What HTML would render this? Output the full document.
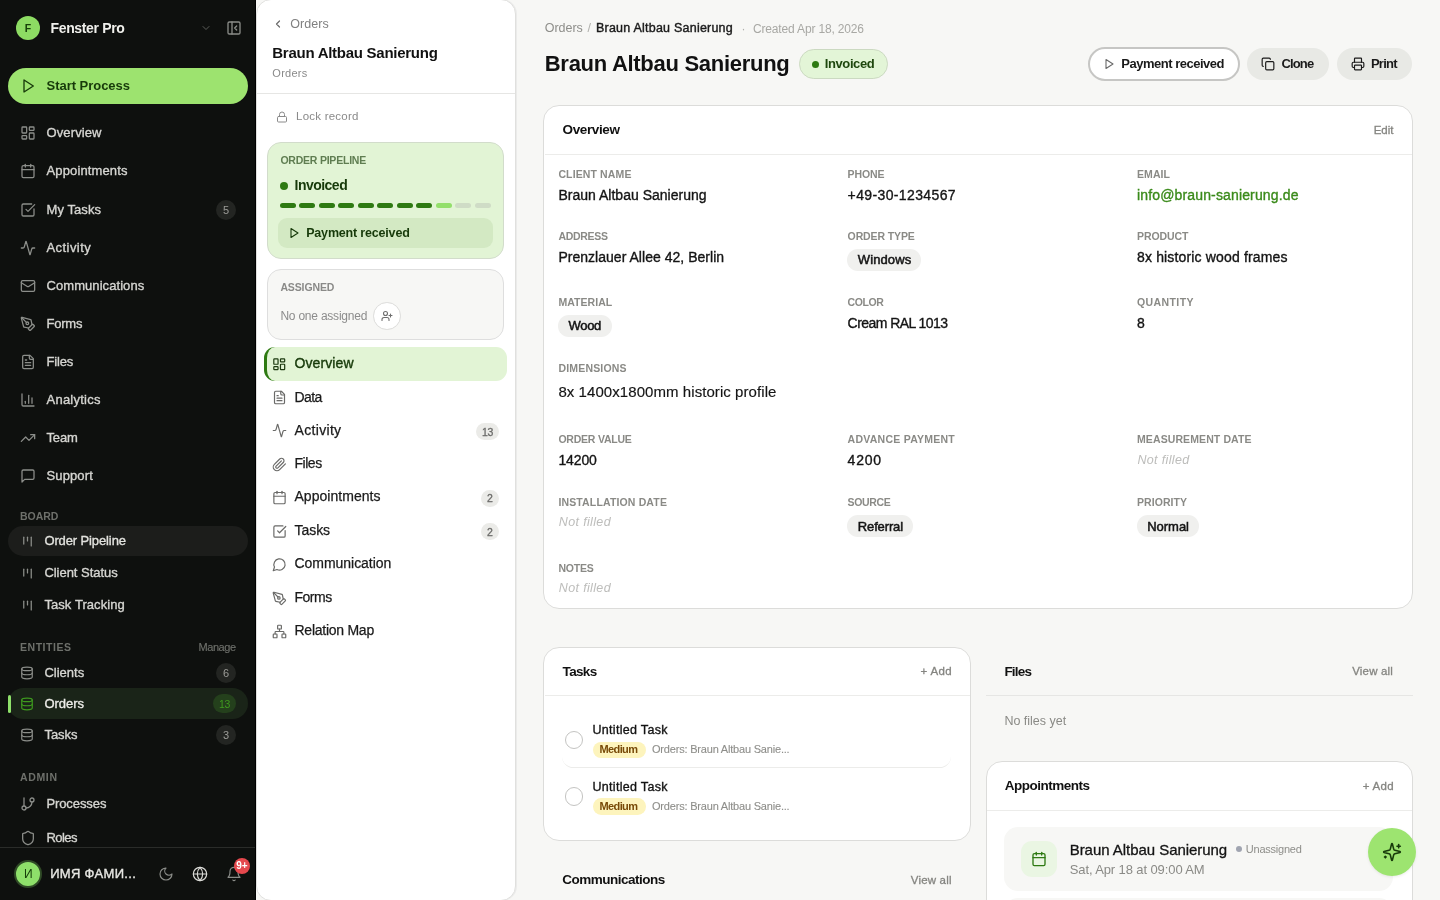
<!DOCTYPE html>
<html><head><meta charset="utf-8"><style>
html,body{margin:0;padding:0;width:1440px;height:900px;overflow:hidden;background:#f7f7f5;font-family:"Liberation Sans", sans-serif;}
body{position:relative;-webkit-font-smoothing:antialiased;}
#root{position:absolute;left:0;top:0;width:1440px;height:900px;will-change:transform;}
</style></head><body><div id="root">
<div style="position:absolute;left:0px;top:0px;width:256px;height:900px;background:#0e100e;border-radius:0px;"></div>
<div style="position:absolute;left:16px;top:16px;width:24px;height:24px;background:#8ddc63;border-radius:12px;"></div>
<div id="t0" style="position:absolute;top:20.56px;font-size:10.5px;line-height:14px;font-weight:700;color:#17400a;white-space:nowrap;left:-122px;width:300px;text-align:center;">F</div>
<div id="t1" style="position:absolute;top:19.15px;font-size:14px;line-height:19px;font-weight:700;color:#f0f0ec;white-space:nowrap;left:50.5px;letter-spacing:-0.351px;">Fenster Pro</div>
<svg style="position:absolute;left:200.00px;top:22.00px;" width="12" height="12" viewBox="0 0 24 24" fill="none" stroke="#5c5e5a" stroke-width="2" stroke-linecap="round" stroke-linejoin="round"><path d="m6 9 6 6 6-6"/></svg>
<svg style="position:absolute;left:226.20px;top:20.00px;" width="16" height="16" viewBox="0 0 24 24" fill="none" stroke="#8a8c88" stroke-width="2" stroke-linecap="round" stroke-linejoin="round"><rect width="18" height="18" x="3" y="3" rx="2"/><path d="M9 3v18"/><path d="m16 15-3-3 3-3"/></svg>
<div style="position:absolute;left:8px;top:68px;width:240px;height:36px;background:#9de36f;border-radius:18px;"></div>
<svg style="position:absolute;left:19.80px;top:77.80px;" width="16" height="16" viewBox="0 0 24 24" fill="none" stroke="#173a0a" stroke-width="2" stroke-linecap="round" stroke-linejoin="round"><polygon points="6 3 20 12 6 21 6 3"/></svg>
<div id="t2" style="position:absolute;top:77.10px;font-size:13px;line-height:17px;font-weight:700;color:#173a0a;white-space:nowrap;left:46.5px;letter-spacing:-0.027px;">Start Process</div>
<svg style="position:absolute;left:20.00px;top:124.70px;" width="16" height="16" viewBox="0 0 24 24" fill="none" stroke="#8c8e8a" stroke-width="1.9" stroke-linecap="round" stroke-linejoin="round"><rect width="7" height="9" x="3" y="3" rx="1"/><rect width="7" height="5" x="14" y="3" rx="1"/><rect width="7" height="9" x="14" y="12" rx="1"/><rect width="7" height="5" x="3" y="16" rx="1"/></svg>
<div id="t3" style="position:absolute;top:124.20px;font-size:13px;line-height:17px;font-weight:400;color:#d6d6d2;white-space:nowrap;-webkit-text-stroke:0.35px #d6d6d2;left:46.5px;letter-spacing:0.116px;">Overview</div>
<svg style="position:absolute;left:20.00px;top:162.60px;" width="16" height="16" viewBox="0 0 24 24" fill="none" stroke="#8c8e8a" stroke-width="1.9" stroke-linecap="round" stroke-linejoin="round"><path d="M8 2v4"/><path d="M16 2v4"/><rect width="18" height="18" x="3" y="4" rx="2"/><path d="M3 10h18"/></svg>
<div id="t4" style="position:absolute;top:162.10px;font-size:13px;line-height:17px;font-weight:400;color:#d6d6d2;white-space:nowrap;-webkit-text-stroke:0.35px #d6d6d2;left:46.5px;letter-spacing:0.136px;">Appointments</div>
<svg style="position:absolute;left:20.00px;top:201.50px;" width="16" height="16" viewBox="0 0 24 24" fill="none" stroke="#8c8e8a" stroke-width="1.9" stroke-linecap="round" stroke-linejoin="round"><path d="M21 10.5V19a2 2 0 0 1-2 2H5a2 2 0 0 1-2-2V5a2 2 0 0 1 2-2h12.5"/><path d="m9 11 3 3L22 4"/></svg>
<div id="t5" style="position:absolute;top:201.00px;font-size:13px;line-height:17px;font-weight:400;color:#d6d6d2;white-space:nowrap;-webkit-text-stroke:0.35px #d6d6d2;left:46.5px;letter-spacing:0.080px;">My Tasks</div>
<svg style="position:absolute;left:20.00px;top:239.70px;" width="16" height="16" viewBox="0 0 24 24" fill="none" stroke="#8c8e8a" stroke-width="1.9" stroke-linecap="round" stroke-linejoin="round"><path d="M22 12h-2.48a2 2 0 0 0-1.93 1.46l-2.35 8.36a.25.25 0 0 1-.48 0L9.24 2.18a.25.25 0 0 0-.48 0l-2.35 8.36A2 2 0 0 1 4.49 12H2"/></svg>
<div id="t6" style="position:absolute;top:239.20px;font-size:13px;line-height:17px;font-weight:400;color:#d6d6d2;white-space:nowrap;-webkit-text-stroke:0.35px #d6d6d2;left:46.5px;letter-spacing:0.433px;">Activity</div>
<svg style="position:absolute;left:20.00px;top:277.70px;" width="16" height="16" viewBox="0 0 24 24" fill="none" stroke="#8c8e8a" stroke-width="1.9" stroke-linecap="round" stroke-linejoin="round"><rect width="20" height="16" x="2" y="4" rx="2"/><path d="m22 7-8.97 5.7a1.94 1.94 0 0 1-2.06 0L2 7"/></svg>
<div id="t7" style="position:absolute;top:277.20px;font-size:13px;line-height:17px;font-weight:400;color:#d6d6d2;white-space:nowrap;-webkit-text-stroke:0.35px #d6d6d2;left:46.5px;letter-spacing:0.067px;">Communications</div>
<svg style="position:absolute;left:20.00px;top:315.70px;" width="16" height="16" viewBox="0 0 24 24" fill="none" stroke="#8c8e8a" stroke-width="1.9" stroke-linecap="round" stroke-linejoin="round"><path d="M15.707 21.293a1 1 0 0 1-1.414 0l-1.586-1.586a1 1 0 0 1 0-1.414l5.586-5.586a1 1 0 0 1 1.414 0l1.586 1.586a1 1 0 0 1 0 1.414z"/><path d="m18 13-1.375-6.874a1 1 0 0 0-.746-.776L3.235 2.028a1 1 0 0 0-1.207 1.207L5.35 15.879a1 1 0 0 0 .776.746L13 18"/><path d="m2.3 2.3 7.286 7.286"/><circle cx="11" cy="11" r="2"/></svg>
<div id="t8" style="position:absolute;top:315.20px;font-size:13px;line-height:17px;font-weight:400;color:#d6d6d2;white-space:nowrap;-webkit-text-stroke:0.35px #d6d6d2;left:46.5px;letter-spacing:-0.211px;">Forms</div>
<svg style="position:absolute;left:20.00px;top:353.70px;" width="16" height="16" viewBox="0 0 24 24" fill="none" stroke="#8c8e8a" stroke-width="1.9" stroke-linecap="round" stroke-linejoin="round"><path d="M15 2H6a2 2 0 0 0-2 2v16a2 2 0 0 0 2 2h12a2 2 0 0 0 2-2V7Z"/><path d="M14 2v4a2 2 0 0 0 2 2h4"/><path d="M10 9H8"/><path d="M16 13H8"/><path d="M16 17H8"/></svg>
<div id="t9" style="position:absolute;top:353.20px;font-size:13px;line-height:17px;font-weight:400;color:#d6d6d2;white-space:nowrap;-webkit-text-stroke:0.35px #d6d6d2;left:46.5px;letter-spacing:-0.163px;">Files</div>
<svg style="position:absolute;left:20.00px;top:391.70px;" width="16" height="16" viewBox="0 0 24 24" fill="none" stroke="#8c8e8a" stroke-width="1.9" stroke-linecap="round" stroke-linejoin="round"><path d="M3 3v16a2 2 0 0 0 2 2h16"/><path d="M18 17V9"/><path d="M13 17V5"/><path d="M8 17v-3"/></svg>
<div id="t10" style="position:absolute;top:391.20px;font-size:13px;line-height:17px;font-weight:400;color:#d6d6d2;white-space:nowrap;-webkit-text-stroke:0.35px #d6d6d2;left:46.5px;letter-spacing:0.246px;">Analytics</div>
<svg style="position:absolute;left:20.00px;top:429.70px;" width="16" height="16" viewBox="0 0 24 24" fill="none" stroke="#8c8e8a" stroke-width="1.9" stroke-linecap="round" stroke-linejoin="round"><polyline points="22 7 13.5 15.5 8.5 10.5 2 17"/><polyline points="16 7 22 7 22 13"/></svg>
<div id="t11" style="position:absolute;top:429.20px;font-size:13px;line-height:17px;font-weight:400;color:#d6d6d2;white-space:nowrap;-webkit-text-stroke:0.35px #d6d6d2;left:46.5px;letter-spacing:-0.132px;">Team</div>
<svg style="position:absolute;left:20.00px;top:467.60px;" width="16" height="16" viewBox="0 0 24 24" fill="none" stroke="#8c8e8a" stroke-width="1.9" stroke-linecap="round" stroke-linejoin="round"><path d="M21 15a2 2 0 0 1-2 2H7l-4 4V5a2 2 0 0 1 2-2h14a2 2 0 0 1 2 2z"/></svg>
<div id="t12" style="position:absolute;top:467.10px;font-size:13px;line-height:17px;font-weight:400;color:#d6d6d2;white-space:nowrap;-webkit-text-stroke:0.35px #d6d6d2;left:46.5px;letter-spacing:0.126px;">Support</div>
<div style="position:absolute;left:216px;top:199.5px;width:20px;height:20px;background:#232522;border-radius:10px;"></div>
<div id="t13" style="position:absolute;top:202.69px;font-size:11px;line-height:15px;font-weight:400;color:#9c9c98;white-space:nowrap;left:76px;width:300px;text-align:center;">5</div>
<div id="t14" style="position:absolute;top:509.36px;font-size:10.5px;line-height:14px;font-weight:700;color:#6e706b;white-space:nowrap;left:20px;letter-spacing:-0.025px;">BOARD</div>
<div style="position:absolute;left:8px;top:526px;width:240px;height:30px;background:#1c1d1b;border-radius:15px;"></div>
<svg style="position:absolute;left:19.50px;top:533.60px;" width="15" height="15" viewBox="0 0 24 24" fill="none" stroke="#8c8e8a" stroke-width="2" stroke-linecap="round" stroke-linejoin="round"><path d="M6 5v11"/><path d="M12 5v6"/><path d="M18 5v14"/></svg>
<div id="t15" style="position:absolute;top:532.20px;font-size:13px;line-height:17px;font-weight:400;color:#e2e2de;white-space:nowrap;-webkit-text-stroke:0.35px #e2e2de;left:44.4px;letter-spacing:-0.116px;">Order Pipeline</div>
<svg style="position:absolute;left:19.50px;top:565.50px;" width="15" height="15" viewBox="0 0 24 24" fill="none" stroke="#8c8e8a" stroke-width="2" stroke-linecap="round" stroke-linejoin="round"><path d="M6 5v11"/><path d="M12 5v6"/><path d="M18 5v14"/></svg>
<div id="t16" style="position:absolute;top:564.10px;font-size:13px;line-height:17px;font-weight:400;color:#d6d6d2;white-space:nowrap;-webkit-text-stroke:0.35px #d6d6d2;left:44.4px;letter-spacing:-0.034px;">Client Status</div>
<svg style="position:absolute;left:19.50px;top:597.50px;" width="15" height="15" viewBox="0 0 24 24" fill="none" stroke="#8c8e8a" stroke-width="2" stroke-linecap="round" stroke-linejoin="round"><path d="M6 5v11"/><path d="M12 5v6"/><path d="M18 5v14"/></svg>
<div id="t17" style="position:absolute;top:596.10px;font-size:13px;line-height:17px;font-weight:400;color:#d6d6d2;white-space:nowrap;-webkit-text-stroke:0.35px #d6d6d2;left:44.4px;letter-spacing:0.076px;">Task Tracking</div>
<div id="t18" style="position:absolute;top:640.36px;font-size:10.5px;line-height:14px;font-weight:700;color:#6e706b;white-space:nowrap;left:20px;letter-spacing:0.533px;">ENTITIES</div>
<div id="t19" style="position:absolute;top:639.69px;font-size:11px;line-height:15px;font-weight:400;color:#6e706b;white-space:nowrap;-webkit-text-stroke:0.15px #6e706b;right:1204.4px;letter-spacing:-0.453px;">Manage</div>
<svg style="position:absolute;left:20.00px;top:666.00px;" width="14" height="14" viewBox="0 0 24 24" fill="none" stroke="#8c8e8a" stroke-width="2" stroke-linecap="round" stroke-linejoin="round"><ellipse cx="12" cy="5" rx="9" ry="3"/><path d="M3 5V19A9 3 0 0 0 21 19V5"/><path d="M3 12A9 3 0 0 0 21 12"/></svg>
<div id="t20" style="position:absolute;top:664.00px;font-size:13px;line-height:17px;font-weight:400;color:#d6d6d2;white-space:nowrap;-webkit-text-stroke:0.35px #d6d6d2;left:44.4px;">Clients</div>
<div style="position:absolute;left:216px;top:662.5px;width:20px;height:20px;background:#232522;border-radius:10px;"></div>
<div id="t21" style="position:absolute;top:665.69px;font-size:11px;line-height:15px;font-weight:400;color:#9c9c98;white-space:nowrap;left:76px;width:300px;text-align:center;">6</div>
<div style="position:absolute;left:8px;top:688px;width:240px;height:31px;background:#1a2418;border-radius:15.5px;"></div>
<div style="position:absolute;left:8px;top:695px;width:3px;height:17.6px;background:#8ee06a;border-radius:1.5px;"></div>
<svg style="position:absolute;left:20.00px;top:697.00px;" width="14" height="14" viewBox="0 0 24 24" fill="none" stroke="#3e9a1e" stroke-width="2" stroke-linecap="round" stroke-linejoin="round"><ellipse cx="12" cy="5" rx="9" ry="3"/><path d="M3 5V19A9 3 0 0 0 21 19V5"/><path d="M3 12A9 3 0 0 0 21 12"/></svg>
<div id="t22" style="position:absolute;top:695.00px;font-size:13px;line-height:17px;font-weight:400;color:#ecece8;white-space:nowrap;-webkit-text-stroke:0.35px #ecece8;left:44.4px;">Orders</div>
<div style="position:absolute;left:213px;top:694px;width:23px;height:19px;background:#24401c;border-radius:9.5px;"></div>
<div id="t23" style="position:absolute;top:696.96px;font-size:10.5px;line-height:14px;font-weight:400;color:#3f9a1f;white-space:nowrap;left:74.5px;width:300px;text-align:center;letter-spacing:-0.400px;">13</div>
<svg style="position:absolute;left:20.00px;top:728.00px;" width="14" height="14" viewBox="0 0 24 24" fill="none" stroke="#8c8e8a" stroke-width="2" stroke-linecap="round" stroke-linejoin="round"><ellipse cx="12" cy="5" rx="9" ry="3"/><path d="M3 5V19A9 3 0 0 0 21 19V5"/><path d="M3 12A9 3 0 0 0 21 12"/></svg>
<div id="t24" style="position:absolute;top:726.00px;font-size:13px;line-height:17px;font-weight:400;color:#d6d6d2;white-space:nowrap;-webkit-text-stroke:0.35px #d6d6d2;left:44.4px;">Tasks</div>
<div style="position:absolute;left:216px;top:724.5px;width:20px;height:20px;background:#232522;border-radius:10px;"></div>
<div id="t25" style="position:absolute;top:727.69px;font-size:11px;line-height:15px;font-weight:400;color:#9c9c98;white-space:nowrap;left:76px;width:300px;text-align:center;">3</div>
<div id="t26" style="position:absolute;top:770.36px;font-size:10.5px;line-height:14px;font-weight:700;color:#6e706b;white-space:nowrap;left:20px;letter-spacing:0.645px;">ADMIN</div>
<svg style="position:absolute;left:20.00px;top:795.70px;" width="16" height="16" viewBox="0 0 24 24" fill="none" stroke="#8c8e8a" stroke-width="1.9" stroke-linecap="round" stroke-linejoin="round"><line x1="6" x2="6" y1="3" y2="15"/><circle cx="18" cy="6" r="3"/><circle cx="6" cy="18" r="3"/><path d="M18 9a9 9 0 0 1-9 9"/></svg>
<div id="t27" style="position:absolute;top:795.00px;font-size:13px;line-height:17px;font-weight:400;color:#d6d6d2;white-space:nowrap;-webkit-text-stroke:0.35px #d6d6d2;left:46.4px;letter-spacing:-0.088px;">Processes</div>
<svg style="position:absolute;left:20.00px;top:830.00px;" width="16" height="16" viewBox="0 0 24 24" fill="none" stroke="#8c8e8a" stroke-width="1.9" stroke-linecap="round" stroke-linejoin="round"><path d="M20 13c0 5-3.5 7.5-7.66 8.95a1 1 0 0 1-.67-.01C7.5 20.5 4 18 4 13V6a1 1 0 0 1 1-1c2 0 4.5-1.2 6.24-2.72a1.17 1.17 0 0 1 1.52 0C14.51 3.81 17 5 19 5a1 1 0 0 1 1 1z"/></svg>
<div id="t28" style="position:absolute;top:829.00px;font-size:13px;line-height:17px;font-weight:400;color:#d6d6d2;white-space:nowrap;-webkit-text-stroke:0.35px #d6d6d2;left:46.4px;letter-spacing:-0.537px;">Roles</div>
<div style="position:absolute;left:0px;top:847px;width:256px;height:1px;background:#2a2c29;border-radius:0px;"></div>
<div style="position:absolute;left:0px;top:848px;width:256px;height:52px;background:#0e100e;border-radius:0px;"></div>
<div style="position:absolute;left:14.2px;top:860px;width:28px;height:28px;background:#8ee06a;border-radius:14px;border:2px solid #2f4a26;box-sizing:border-box;"></div>
<div id="t29" style="position:absolute;top:865.84px;font-size:12px;line-height:16px;font-weight:400;color:#17400a;white-space:nowrap;left:-121.8px;width:300px;text-align:center;">И</div>
<div id="t30" style="position:absolute;top:865.00px;font-size:13px;line-height:17px;font-weight:400;color:#e8e8e4;white-space:nowrap;-webkit-text-stroke:0.35px #e8e8e4;left:50.2px;letter-spacing:0.315px;">ИМЯ ФАМИ...</div>
<svg style="position:absolute;left:157.80px;top:865.80px;" width="16" height="16" viewBox="0 0 24 24" fill="none" stroke="#8a8c88" stroke-width="1.75" stroke-linecap="round" stroke-linejoin="round"><path d="M12 3a6 6 0 0 0 9 9 9 9 0 1 1-9-9Z"/></svg>
<svg style="position:absolute;left:192.00px;top:866.00px;" width="16" height="16" viewBox="0 0 24 24" fill="none" stroke="#dcdcd8" stroke-width="1.75" stroke-linecap="round" stroke-linejoin="round"><circle cx="12" cy="12" r="10"/><path d="M12 2a14.5 14.5 0 0 0 0 20 14.5 14.5 0 0 0 0-20"/><path d="M2 12h20"/></svg>
<svg style="position:absolute;left:226.00px;top:865.80px;" width="16" height="16" viewBox="0 0 24 24" fill="none" stroke="#8a8c88" stroke-width="1.75" stroke-linecap="round" stroke-linejoin="round"><path d="M6 8a6 6 0 0 1 12 0c0 7 3 9 3 9H3s3-2 3-9"/><path d="M10.3 21a1.94 1.94 0 0 0 3.4 0"/></svg>
<div style="position:absolute;left:234px;top:858px;width:16px;height:16px;background:#e5484d;border-radius:8px;"></div>
<div id="t31" style="position:absolute;top:859.24px;font-size:10px;line-height:13px;font-weight:700;color:#ffffff;white-space:nowrap;left:92px;width:300px;text-align:center;">9+</div>
<div style="position:absolute;left:255px;top:0px;width:1px;height:900px;background:#000;border-radius:0px;"></div>
<div style="position:absolute;left:256px;top:-1px;width:260px;height:902px;background:#ffffff;border-radius:15px;border:1px solid #e0e0de;box-sizing:border-box;box-shadow:1px 0 0 #ebebea;"></div>
<svg style="position:absolute;left:272.20px;top:18.00px;" width="12" height="12" viewBox="0 0 24 24" fill="none" stroke="#6a6a6a" stroke-width="2.4" stroke-linecap="round" stroke-linejoin="round"><path d="m15 18-6-6 6-6"/></svg>
<div id="t32" style="position:absolute;top:16.17px;font-size:12.5px;line-height:17px;font-weight:400;color:#808080;white-space:nowrap;left:290.3px;letter-spacing:0.059px;">Orders</div>
<div id="t33" style="position:absolute;top:42.90px;font-size:15px;line-height:20px;font-weight:700;color:#111111;white-space:nowrap;left:272.3px;letter-spacing:-0.268px;">Braun Altbau Sanierung</div>
<div id="t34" style="position:absolute;top:66.19px;font-size:11px;line-height:15px;font-weight:400;color:#8a8a8a;white-space:nowrap;left:272.3px;letter-spacing:0.275px;">Orders</div>
<div style="position:absolute;left:257px;top:93px;width:258px;height:1px;background:#e6e6e4;border-radius:0px;"></div>
<svg style="position:absolute;left:276.00px;top:111.00px;" width="12" height="12" viewBox="0 0 24 24" fill="none" stroke="#8a8a8a" stroke-width="2" stroke-linecap="round" stroke-linejoin="round"><rect width="18" height="11" x="3" y="11" rx="2" ry="2"/><path d="M7 11V7a5 5 0 0 1 10 0v4"/></svg>
<div id="t35" style="position:absolute;top:108.52px;font-size:11.5px;line-height:15px;font-weight:400;color:#8a8a8a;white-space:nowrap;left:296px;letter-spacing:0.231px;">Lock record</div>
<div style="position:absolute;left:267px;top:142px;width:237px;height:116.6px;background:#e2f4d5;border-radius:14px;border:1px solid #d2dccb;box-sizing:border-box;"></div>
<div id="t36" style="position:absolute;top:153.36px;font-size:10.5px;line-height:14px;font-weight:700;color:#5f7d51;white-space:nowrap;left:280.4px;letter-spacing:-0.222px;">ORDER PIPELINE</div>
<div style="position:absolute;left:280px;top:182px;width:8px;height:8px;background:#2e7a12;border-radius:4px;"></div>
<div id="t37" style="position:absolute;top:175.65px;font-size:14px;line-height:19px;font-weight:700;color:#173a0a;white-space:nowrap;left:294.5px;letter-spacing:-0.514px;">Invoiced</div>
<div style="position:absolute;left:280px;top:203.2px;width:16.2px;height:5px;background:#2e7a12;border-radius:2.5px;"></div>
<div style="position:absolute;left:299px;top:203.2px;width:16.2px;height:5px;background:#2e7a12;border-radius:2.5px;"></div>
<div style="position:absolute;left:319px;top:203.2px;width:16.2px;height:5px;background:#2e7a12;border-radius:2.5px;"></div>
<div style="position:absolute;left:338.2px;top:203.2px;width:16.2px;height:5px;background:#2e7a12;border-radius:2.5px;"></div>
<div style="position:absolute;left:358px;top:203.2px;width:16.2px;height:5px;background:#2e7a12;border-radius:2.5px;"></div>
<div style="position:absolute;left:377px;top:203.2px;width:16.2px;height:5px;background:#2e7a12;border-radius:2.5px;"></div>
<div style="position:absolute;left:397px;top:203.2px;width:16.2px;height:5px;background:#2e7a12;border-radius:2.5px;"></div>
<div style="position:absolute;left:416px;top:203.2px;width:16.2px;height:5px;background:#2e7a12;border-radius:2.5px;"></div>
<div style="position:absolute;left:436px;top:203.2px;width:16.2px;height:5px;background:#93df6b;border-radius:2.5px;"></div>
<div style="position:absolute;left:455px;top:203.2px;width:16.2px;height:5px;background:#cfdcc6;border-radius:2.5px;"></div>
<div style="position:absolute;left:475px;top:203.2px;width:16.2px;height:5px;background:#cfdcc6;border-radius:2.5px;"></div>
<div style="position:absolute;left:278px;top:218px;width:215px;height:29.7px;background:#d3e9c3;border-radius:9px;"></div>
<svg style="position:absolute;left:288.00px;top:226.80px;" width="12" height="12" viewBox="0 0 24 24" fill="none" stroke="#173a0a" stroke-width="2.2" stroke-linecap="round" stroke-linejoin="round"><polygon points="6 3 20 12 6 21 6 3"/></svg>
<div id="t38" style="position:absolute;top:224.87px;font-size:12.5px;line-height:17px;font-weight:700;color:#173a0a;white-space:nowrap;left:306.2px;letter-spacing:-0.181px;">Payment received</div>
<div style="position:absolute;left:267px;top:269px;width:237px;height:70.5px;background:#f7f7f5;border-radius:14px;border:1px solid #dedede;box-sizing:border-box;"></div>
<div id="t39" style="position:absolute;top:280.36px;font-size:10.5px;line-height:14px;font-weight:700;color:#8a8a88;white-space:nowrap;left:280.4px;letter-spacing:-0.121px;">ASSIGNED</div>
<div id="t40" style="position:absolute;top:307.84px;font-size:12px;line-height:16px;font-weight:400;color:#8c8c8c;white-space:nowrap;left:280.4px;letter-spacing:-0.220px;">No one assigned</div>
<div style="position:absolute;left:373px;top:302px;width:27.6px;height:27.6px;background:#ffffff;border-radius:13.8px;border:1px solid #dcdcda;box-sizing:border-box;"></div>
<svg style="position:absolute;left:380.80px;top:310.00px;" width="12" height="12" viewBox="0 0 24 24" fill="none" stroke="#6e6e6e" stroke-width="2.2" stroke-linecap="round" stroke-linejoin="round"><path d="M16 21v-2a4 4 0 0 0-4-4H6a4 4 0 0 0-4 4v2"/><circle cx="9" cy="7" r="4"/><line x1="19" x2="19" y1="8" y2="14"/><line x1="22" x2="16" y1="11" y2="11"/></svg>
<div style="position:absolute;left:264px;top:347px;width:243px;height:33.8px;background:#e2f4d5;border-radius:11px;border-left:3px solid #2e7a12;box-sizing:border-box;"></div>
<svg style="position:absolute;left:271.75px;top:357.15px;" width="14.5" height="14.5" viewBox="0 0 24 24" fill="none" stroke="#1d3a10" stroke-width="2" stroke-linecap="round" stroke-linejoin="round"><rect width="7" height="9" x="3" y="3" rx="1"/><rect width="7" height="5" x="14" y="3" rx="1"/><rect width="7" height="9" x="14" y="12" rx="1"/><rect width="7" height="5" x="3" y="16" rx="1"/></svg>
<div id="t41" style="position:absolute;top:354.05px;font-size:14px;line-height:19px;font-weight:400;color:#173a0a;white-space:nowrap;-webkit-text-stroke:0.4px #173a0a;left:294.5px;letter-spacing:0.092px;">Overview</div>
<svg style="position:absolute;left:271.50px;top:389.80px;" width="15" height="15" viewBox="0 0 24 24" fill="none" stroke="#6a6a68" stroke-width="1.9" stroke-linecap="round" stroke-linejoin="round"><path d="M15 2H6a2 2 0 0 0-2 2v16a2 2 0 0 0 2 2h12a2 2 0 0 0 2-2V7Z"/><path d="M14 2v4a2 2 0 0 0 2 2h4"/><path d="M10 9H8"/><path d="M16 13H8"/><path d="M16 17H8"/></svg>
<div id="t42" style="position:absolute;top:387.65px;font-size:14px;line-height:19px;font-weight:400;color:#1a1a1a;white-space:nowrap;-webkit-text-stroke:0.25px #1a1a1a;left:294.5px;letter-spacing:-0.626px;">Data</div>
<svg style="position:absolute;left:271.50px;top:423.00px;" width="15" height="15" viewBox="0 0 24 24" fill="none" stroke="#6a6a68" stroke-width="1.9" stroke-linecap="round" stroke-linejoin="round"><path d="M22 12h-2.48a2 2 0 0 0-1.93 1.46l-2.35 8.36a.25.25 0 0 1-.48 0L9.24 2.18a.25.25 0 0 0-.48 0l-2.35 8.36A2 2 0 0 1 4.49 12H2"/></svg>
<div id="t43" style="position:absolute;top:420.85px;font-size:14px;line-height:19px;font-weight:400;color:#1a1a1a;white-space:nowrap;-webkit-text-stroke:0.25px #1a1a1a;left:294.5px;letter-spacing:0.322px;">Activity</div>
<svg style="position:absolute;left:271.50px;top:456.50px;" width="15" height="15" viewBox="0 0 24 24" fill="none" stroke="#6a6a68" stroke-width="1.9" stroke-linecap="round" stroke-linejoin="round"><path d="m21.44 11.05-9.19 9.19a6 6 0 0 1-8.49-8.49l8.57-8.57A4 4 0 1 1 18 8.84l-8.59 8.57a2 2 0 0 1-2.83-2.83l8.49-8.48"/></svg>
<div id="t44" style="position:absolute;top:454.35px;font-size:14px;line-height:19px;font-weight:400;color:#1a1a1a;white-space:nowrap;-webkit-text-stroke:0.25px #1a1a1a;left:294.5px;letter-spacing:-0.466px;">Files</div>
<svg style="position:absolute;left:271.50px;top:489.50px;" width="15" height="15" viewBox="0 0 24 24" fill="none" stroke="#6a6a68" stroke-width="1.9" stroke-linecap="round" stroke-linejoin="round"><path d="M8 2v4"/><path d="M16 2v4"/><rect width="18" height="18" x="3" y="4" rx="2"/><path d="M3 10h18"/></svg>
<div id="t45" style="position:absolute;top:487.35px;font-size:14px;line-height:19px;font-weight:400;color:#1a1a1a;white-space:nowrap;-webkit-text-stroke:0.25px #1a1a1a;left:294.5px;letter-spacing:0.036px;">Appointments</div>
<svg style="position:absolute;left:271.50px;top:523.50px;" width="15" height="15" viewBox="0 0 24 24" fill="none" stroke="#6a6a68" stroke-width="1.9" stroke-linecap="round" stroke-linejoin="round"><path d="M21 10.5V19a2 2 0 0 1-2 2H5a2 2 0 0 1-2-2V5a2 2 0 0 1 2-2h12.5"/><path d="m9 11 3 3L22 4"/></svg>
<div id="t46" style="position:absolute;top:521.35px;font-size:14px;line-height:19px;font-weight:400;color:#1a1a1a;white-space:nowrap;-webkit-text-stroke:0.25px #1a1a1a;left:294.5px;letter-spacing:-0.049px;">Tasks</div>
<svg style="position:absolute;left:271.50px;top:556.50px;" width="15" height="15" viewBox="0 0 24 24" fill="none" stroke="#6a6a68" stroke-width="1.9" stroke-linecap="round" stroke-linejoin="round"><path d="M7.9 20A9 9 0 1 0 4 16.1L2 22Z"/></svg>
<div id="t47" style="position:absolute;top:554.35px;font-size:14px;line-height:19px;font-weight:400;color:#1a1a1a;white-space:nowrap;-webkit-text-stroke:0.25px #1a1a1a;left:294.5px;letter-spacing:-0.039px;">Communication</div>
<svg style="position:absolute;left:271.50px;top:590.50px;" width="15" height="15" viewBox="0 0 24 24" fill="none" stroke="#6a6a68" stroke-width="1.9" stroke-linecap="round" stroke-linejoin="round"><path d="M15.707 21.293a1 1 0 0 1-1.414 0l-1.586-1.586a1 1 0 0 1 0-1.414l5.586-5.586a1 1 0 0 1 1.414 0l1.586 1.586a1 1 0 0 1 0 1.414z"/><path d="m18 13-1.375-6.874a1 1 0 0 0-.746-.776L3.235 2.028a1 1 0 0 0-1.207 1.207L5.35 15.879a1 1 0 0 0 .776.746L13 18"/><path d="m2.3 2.3 7.286 7.286"/><circle cx="11" cy="11" r="2"/></svg>
<div id="t48" style="position:absolute;top:588.35px;font-size:14px;line-height:19px;font-weight:400;color:#1a1a1a;white-space:nowrap;-webkit-text-stroke:0.25px #1a1a1a;left:294.5px;letter-spacing:-0.493px;">Forms</div>
<svg style="position:absolute;left:271.50px;top:623.50px;" width="15" height="15" viewBox="0 0 24 24" fill="none" stroke="#6a6a68" stroke-width="1.9" stroke-linecap="round" stroke-linejoin="round"><rect x="16" y="16" width="6" height="6" rx="1"/><rect x="2" y="16" width="6" height="6" rx="1"/><rect x="9" y="2" width="6" height="6" rx="1"/><path d="M5 16v-3a1 1 0 0 1 1-1h12a1 1 0 0 1 1 1v3"/><path d="M12 12V8"/></svg>
<div id="t49" style="position:absolute;top:621.35px;font-size:14px;line-height:19px;font-weight:400;color:#1a1a1a;white-space:nowrap;-webkit-text-stroke:0.25px #1a1a1a;left:294.5px;letter-spacing:-0.255px;">Relation Map</div>
<div style="position:absolute;left:476px;top:423px;width:23px;height:17px;background:#ebebe8;border-radius:8.5px;"></div>
<div id="t50" style="position:absolute;top:424.66px;font-size:10.5px;line-height:14px;font-weight:400;color:#6a6a68;white-space:nowrap;-webkit-text-stroke:0.3px #6a6a68;left:337.5px;width:300px;text-align:center;letter-spacing:-0.300px;">13</div>
<div style="position:absolute;left:481px;top:489.5px;width:18px;height:17px;background:#ebebe8;border-radius:8.5px;"></div>
<div id="t51" style="position:absolute;top:491.16px;font-size:10.5px;line-height:14px;font-weight:400;color:#6a6a68;white-space:nowrap;-webkit-text-stroke:0.3px #6a6a68;left:340px;width:300px;text-align:center;">2</div>
<div style="position:absolute;left:481px;top:523px;width:18px;height:17px;background:#ebebe8;border-radius:8.5px;"></div>
<div id="t52" style="position:absolute;top:524.66px;font-size:10.5px;line-height:14px;font-weight:400;color:#6a6a68;white-space:nowrap;-webkit-text-stroke:0.3px #6a6a68;left:340px;width:300px;text-align:center;">2</div>
<div id="t53" style="position:absolute;top:20.17px;font-size:12.5px;line-height:17px;font-weight:400;color:#8e8e8a;white-space:nowrap;left:544.75px;letter-spacing:-0.041px;">Orders</div>
<div id="t54" style="position:absolute;top:20.17px;font-size:12.5px;line-height:17px;font-weight:400;color:#b0b0ac;white-space:nowrap;left:587.5px;">/</div>
<div id="t55" style="position:absolute;top:20.17px;font-size:12.5px;line-height:17px;font-weight:400;color:#1a1a1a;white-space:nowrap;-webkit-text-stroke:0.4px #1a1a1a;left:596px;letter-spacing:0.224px;">Braun Altbau Sanierung</div>
<div id="t56" style="position:absolute;top:20.84px;font-size:12px;line-height:16px;font-weight:400;color:#b0b0ac;white-space:nowrap;left:593.5px;width:300px;text-align:center;">·</div>
<div id="t57" style="position:absolute;top:20.84px;font-size:12px;line-height:16px;font-weight:400;color:#a8a8a4;white-space:nowrap;left:753px;letter-spacing:-0.163px;">Created Apr 18, 2026</div>
<div id="t58" style="position:absolute;top:49.13px;font-size:22px;line-height:29px;font-weight:700;color:#111111;white-space:nowrap;left:544.75px;letter-spacing:-0.285px;">Braun Altbau Sanierung</div>
<div style="position:absolute;left:799px;top:49.2px;width:89px;height:29.6px;background:#e3f5d7;border-radius:14.8px;border:1px solid #cbd9c1;box-sizing:border-box;"></div>
<div style="position:absolute;left:811.6px;top:60.8px;width:7.3px;height:7.3px;background:#2e7a12;border-radius:4px;"></div>
<div id="t59" style="position:absolute;top:55.25px;font-size:13px;line-height:17px;font-weight:700;color:#1f470e;white-space:nowrap;left:824.75px;letter-spacing:-0.393px;">Invoiced</div>
<div style="position:absolute;left:1087.8px;top:46.6px;width:152.5px;height:34.7px;background:#ffffff;border-radius:17.5px;border:2px solid #c6c6c4;box-sizing:border-box;"></div>
<svg style="position:absolute;left:1103.20px;top:57.90px;" width="12" height="12" viewBox="0 0 24 24" fill="none" stroke="#6a6a6a" stroke-width="2.2" stroke-linecap="round" stroke-linejoin="round"><polygon points="6 3 20 12 6 21 6 3"/></svg>
<div id="t60" style="position:absolute;top:55.30px;font-size:13px;line-height:17px;font-weight:700;color:#1a1a1a;white-space:nowrap;left:1121.3px;letter-spacing:-0.492px;">Payment received</div>
<div style="position:absolute;left:1247px;top:47.8px;width:81.6px;height:32px;background:#e8e9e5;border-radius:16px;"></div>
<svg style="position:absolute;left:1261.00px;top:56.80px;" width="14" height="14" viewBox="0 0 24 24" fill="none" stroke="#1a1a1a" stroke-width="2" stroke-linecap="round" stroke-linejoin="round"><rect width="14" height="14" x="8" y="8" rx="2" ry="2"/><path d="M4 16c-1.1 0-2-.9-2-2V4c0-1.1.9-2 2-2h10c1.1 0 2 .9 2 2"/></svg>
<div id="t61" style="position:absolute;top:55.30px;font-size:13px;line-height:17px;font-weight:700;color:#1a1a1a;white-space:nowrap;left:1281.4px;letter-spacing:-0.831px;">Clone</div>
<div style="position:absolute;left:1337px;top:47.8px;width:75px;height:32px;background:#e8e9e5;border-radius:16px;"></div>
<svg style="position:absolute;left:1351.20px;top:56.80px;" width="14" height="14" viewBox="0 0 24 24" fill="none" stroke="#1a1a1a" stroke-width="2" stroke-linecap="round" stroke-linejoin="round"><path d="M6 18H4a2 2 0 0 1-2-2v-5a2 2 0 0 1 2-2h16a2 2 0 0 1 2 2v5a2 2 0 0 1-2 2h-2"/><path d="M6 9V3a1 1 0 0 1 1-1h10a1 1 0 0 1 1 1v6"/><rect x="6" y="14" width="12" height="8" rx="1"/></svg>
<div id="t62" style="position:absolute;top:55.30px;font-size:13px;line-height:17px;font-weight:700;color:#1a1a1a;white-space:nowrap;left:1370.9px;letter-spacing:-0.731px;">Print</div>
<div style="position:absolute;left:543px;top:105px;width:869.5px;height:503.5px;background:#ffffff;border-radius:16px;border:1px solid #dcdcda;box-sizing:border-box;"></div>
<div id="t63" style="position:absolute;top:120.72px;font-size:13.5px;line-height:18px;font-weight:700;color:#111111;white-space:nowrap;left:562.5px;letter-spacing:-0.364px;">Overview</div>
<div id="t64" style="position:absolute;top:122.52px;font-size:11.5px;line-height:15px;font-weight:400;color:#858581;white-space:nowrap;-webkit-text-stroke:0.3px #858581;right:46.5px;">Edit</div>
<div style="position:absolute;left:544.5px;top:154px;width:867px;height:1px;background:#ececea;border-radius:0px;"></div>
<div id="t65" style="position:absolute;top:167.11px;font-size:10.5px;line-height:14px;font-weight:700;color:#8a8a86;white-space:nowrap;left:558.4px;letter-spacing:0.125px;">CLIENT NAME</div>
<div id="t66" style="position:absolute;top:186.25px;font-size:14px;line-height:19px;font-weight:400;color:#141414;white-space:nowrap;-webkit-text-stroke:0.35px #141414;left:558.4px;letter-spacing:0.015px;">Braun Altbau Sanierung</div>
<div id="t67" style="position:absolute;top:167.11px;font-size:10.5px;line-height:14px;font-weight:700;color:#8a8a86;white-space:nowrap;left:847.6px;letter-spacing:-0.111px;">PHONE</div>
<div id="t68" style="position:absolute;top:186.25px;font-size:14px;line-height:19px;font-weight:400;color:#141414;white-space:nowrap;-webkit-text-stroke:0.35px #141414;left:847.6px;letter-spacing:0.373px;">+49-30-1234567</div>
<div id="t69" style="position:absolute;top:167.11px;font-size:10.5px;line-height:14px;font-weight:700;color:#8a8a86;white-space:nowrap;left:1137px;letter-spacing:0.082px;">EMAIL</div>
<div id="t70" style="position:absolute;top:186.25px;font-size:14px;line-height:19px;font-weight:400;color:#3a8a1a;white-space:nowrap;-webkit-text-stroke:0.35px #3a8a1a;left:1137px;letter-spacing:0.149px;">info@braun-sanierung.de</div>
<div id="t71" style="position:absolute;top:229.36px;font-size:10.5px;line-height:14px;font-weight:700;color:#8a8a86;white-space:nowrap;left:558.4px;letter-spacing:-0.307px;">ADDRESS</div>
<div id="t72" style="position:absolute;top:248.05px;font-size:14px;line-height:19px;font-weight:400;color:#141414;white-space:nowrap;-webkit-text-stroke:0.35px #141414;left:558.4px;letter-spacing:0.027px;">Prenzlauer Allee 42, Berlin</div>
<div id="t73" style="position:absolute;top:229.36px;font-size:10.5px;line-height:14px;font-weight:700;color:#8a8a86;white-space:nowrap;left:847.6px;letter-spacing:-0.118px;">ORDER TYPE</div>
<div style="position:absolute;left:847.2px;top:249px;width:74px;height:21.7px;background:#f0f0ee;border-radius:10.85px;"></div>
<div id="t74" style="position:absolute;top:251.20px;font-size:13px;line-height:17px;font-weight:400;color:#141414;white-space:nowrap;-webkit-text-stroke:0.5px #141414;left:857.8000000000001px;letter-spacing:0.108px;">Windows</div>
<div id="t75" style="position:absolute;top:229.36px;font-size:10.5px;line-height:14px;font-weight:700;color:#8a8a86;white-space:nowrap;left:1137px;letter-spacing:-0.070px;">PRODUCT</div>
<div id="t76" style="position:absolute;top:248.05px;font-size:14px;line-height:19px;font-weight:400;color:#141414;white-space:nowrap;-webkit-text-stroke:0.35px #141414;left:1137px;letter-spacing:0.156px;">8x historic wood frames</div>
<div id="t77" style="position:absolute;top:295.46px;font-size:10.5px;line-height:14px;font-weight:700;color:#8a8a86;white-space:nowrap;left:558.4px;letter-spacing:0.047px;">MATERIAL</div>
<div style="position:absolute;left:558.0px;top:315px;width:53.6px;height:21.7px;background:#f0f0ee;border-radius:10.85px;"></div>
<div id="t78" style="position:absolute;top:317.20px;font-size:13px;line-height:17px;font-weight:400;color:#141414;white-space:nowrap;-webkit-text-stroke:0.5px #141414;left:568.6px;letter-spacing:-0.345px;">Wood</div>
<div id="t79" style="position:absolute;top:295.46px;font-size:10.5px;line-height:14px;font-weight:700;color:#8a8a86;white-space:nowrap;left:847.6px;letter-spacing:-0.430px;">COLOR</div>
<div id="t80" style="position:absolute;top:313.85px;font-size:14px;line-height:19px;font-weight:400;color:#141414;white-space:nowrap;-webkit-text-stroke:0.35px #141414;left:847.6px;letter-spacing:-0.558px;">Cream RAL 1013</div>
<div id="t81" style="position:absolute;top:295.46px;font-size:10.5px;line-height:14px;font-weight:700;color:#8a8a86;white-space:nowrap;left:1137px;letter-spacing:0.404px;">QUANTITY</div>
<div id="t82" style="position:absolute;top:313.85px;font-size:14px;line-height:19px;font-weight:400;color:#141414;white-space:nowrap;-webkit-text-stroke:0.35px #141414;left:1137px;">8</div>
<div id="t83" style="position:absolute;top:361.36px;font-size:10.5px;line-height:14px;font-weight:700;color:#8a8a86;white-space:nowrap;left:558.4px;letter-spacing:0.187px;">DIMENSIONS</div>
<div id="t84" style="position:absolute;top:381.80px;font-size:15px;line-height:20px;font-weight:400;color:#141414;white-space:nowrap;-webkit-text-stroke:0.15px #141414;left:558.4px;letter-spacing:0.068px;">8x 1400x1800mm historic profile</div>
<div id="t85" style="position:absolute;top:431.86px;font-size:10.5px;line-height:14px;font-weight:700;color:#8a8a86;white-space:nowrap;left:558.4px;letter-spacing:-0.216px;">ORDER VALUE</div>
<div id="t86" style="position:absolute;top:450.95px;font-size:14px;line-height:19px;font-weight:400;color:#141414;white-space:nowrap;-webkit-text-stroke:0.35px #141414;left:558.4px;letter-spacing:-0.109px;">14200</div>
<div id="t87" style="position:absolute;top:431.86px;font-size:10.5px;line-height:14px;font-weight:700;color:#8a8a86;white-space:nowrap;left:847.6px;letter-spacing:0.253px;">ADVANCE PAYMENT</div>
<div id="t88" style="position:absolute;top:450.95px;font-size:14px;line-height:19px;font-weight:400;color:#141414;white-space:nowrap;-webkit-text-stroke:0.35px #141414;left:847.6px;letter-spacing:0.781px;">4200</div>
<div id="t89" style="position:absolute;top:431.86px;font-size:10.5px;line-height:14px;font-weight:700;color:#8a8a86;white-space:nowrap;left:1137px;letter-spacing:0.101px;">MEASUREMENT DATE</div>
<div id="t90" style="position:absolute;top:451.67px;font-size:12.5px;line-height:17px;font-weight:400;color:#bdbdbb;white-space:nowrap;font-style:italic;left:1137.4px;letter-spacing:0.351px;">Not filled</div>
<div id="t91" style="position:absolute;top:495.46px;font-size:10.5px;line-height:14px;font-weight:700;color:#8a8a86;white-space:nowrap;left:558.4px;letter-spacing:0.146px;">INSTALLATION DATE</div>
<div id="t92" style="position:absolute;top:514.17px;font-size:12.5px;line-height:17px;font-weight:400;color:#bdbdbb;white-space:nowrap;font-style:italic;left:558.8px;letter-spacing:0.351px;">Not filled</div>
<div id="t93" style="position:absolute;top:495.46px;font-size:10.5px;line-height:14px;font-weight:700;color:#8a8a86;white-space:nowrap;left:847.6px;letter-spacing:-0.328px;">SOURCE</div>
<div style="position:absolute;left:847.2px;top:515.4px;width:65.5px;height:21.7px;background:#f0f0ee;border-radius:10.85px;"></div>
<div id="t94" style="position:absolute;top:517.60px;font-size:13px;line-height:17px;font-weight:400;color:#141414;white-space:nowrap;-webkit-text-stroke:0.5px #141414;left:857.8000000000001px;letter-spacing:-0.136px;">Referral</div>
<div id="t95" style="position:absolute;top:495.46px;font-size:10.5px;line-height:14px;font-weight:700;color:#8a8a86;white-space:nowrap;left:1137px;letter-spacing:0.058px;">PRIORITY</div>
<div style="position:absolute;left:1136.6px;top:515.4px;width:62.3px;height:21.7px;background:#f0f0ee;border-radius:10.85px;"></div>
<div id="t96" style="position:absolute;top:517.60px;font-size:13px;line-height:17px;font-weight:400;color:#141414;white-space:nowrap;-webkit-text-stroke:0.5px #141414;left:1147.2px;letter-spacing:-0.021px;">Normal</div>
<div id="t97" style="position:absolute;top:561.36px;font-size:10.5px;line-height:14px;font-weight:700;color:#8a8a86;white-space:nowrap;left:558.4px;letter-spacing:-0.218px;">NOTES</div>
<div id="t98" style="position:absolute;top:580.17px;font-size:12.5px;line-height:17px;font-weight:400;color:#bdbdbb;white-space:nowrap;font-style:italic;left:558.8px;letter-spacing:0.351px;">Not filled</div>
<div style="position:absolute;left:543px;top:647px;width:427.5px;height:193.5px;background:#ffffff;border-radius:16px;border:1px solid #dcdcda;box-sizing:border-box;"></div>
<div id="t99" style="position:absolute;top:662.52px;font-size:13.5px;line-height:18px;font-weight:700;color:#111111;white-space:nowrap;left:562.6px;letter-spacing:-0.670px;">Tasks</div>
<div id="t100" style="position:absolute;top:663.72px;font-size:11.5px;line-height:15px;font-weight:400;color:#858581;white-space:nowrap;-webkit-text-stroke:0.3px #858581;right:488.1px;letter-spacing:0.312px;">+ Add</div>
<div style="position:absolute;left:544.5px;top:695px;width:425px;height:1px;background:#ececea;border-radius:0px;"></div>
<div style="position:absolute;left:564.6px;top:730.55px;width:18.7px;height:18.7px;background:#ffffff;border-radius:9.35px;border:1.75px solid #c4c4c2;box-sizing:border-box;"></div>
<div id="t101" style="position:absolute;top:722.17px;font-size:12.5px;line-height:17px;font-weight:400;color:#141414;white-space:nowrap;-webkit-text-stroke:0.35px #141414;left:592.5px;letter-spacing:0.305px;">Untitled Task</div>
<div style="position:absolute;left:592.5px;top:741.5px;width:53.2px;height:16.3px;background:#fdf4bd;border-radius:8.15px;"></div>
<div id="t102" style="position:absolute;top:741.89px;font-size:11px;line-height:15px;font-weight:700;color:#784a08;white-space:nowrap;left:599.5px;letter-spacing:-0.613px;">Medium</div>
<div id="t103" style="position:absolute;top:741.89px;font-size:11px;line-height:15px;font-weight:400;color:#8e8e8a;white-space:nowrap;-webkit-text-stroke:0.1px #8e8e8a;left:652px;letter-spacing:-0.193px;">Orders: Braun Altbau Sanie...</div>
<div style="position:absolute;left:564.6px;top:787.4499999999999px;width:18.7px;height:18.7px;background:#ffffff;border-radius:9.35px;border:1.75px solid #c4c4c2;box-sizing:border-box;"></div>
<div id="t104" style="position:absolute;top:779.07px;font-size:12.5px;line-height:17px;font-weight:400;color:#141414;white-space:nowrap;-webkit-text-stroke:0.35px #141414;left:592.5px;letter-spacing:0.305px;">Untitled Task</div>
<div style="position:absolute;left:592.5px;top:798.4px;width:53.2px;height:16.3px;background:#fdf4bd;border-radius:8.15px;"></div>
<div id="t105" style="position:absolute;top:798.79px;font-size:11px;line-height:15px;font-weight:700;color:#784a08;white-space:nowrap;left:599.5px;letter-spacing:-0.613px;">Medium</div>
<div id="t106" style="position:absolute;top:798.79px;font-size:11px;line-height:15px;font-weight:400;color:#8e8e8a;white-space:nowrap;-webkit-text-stroke:0.1px #8e8e8a;left:652px;letter-spacing:-0.193px;">Orders: Braun Altbau Sanie...</div>
<div style="position:absolute;left:562px;top:745px;width:389px;height:22.5px;background:transparent;border-radius:12px;border-bottom:1px solid #ececea;box-sizing:border-box;"></div>
<div id="t107" style="position:absolute;top:870.82px;font-size:13.5px;line-height:18px;font-weight:700;color:#111111;white-space:nowrap;left:562.25px;letter-spacing:-0.501px;">Communications</div>
<div id="t108" style="position:absolute;top:872.52px;font-size:11.5px;line-height:15px;font-weight:400;color:#858581;white-space:nowrap;-webkit-text-stroke:0.3px #858581;right:488.4px;letter-spacing:0.168px;">View all</div>
<div id="t109" style="position:absolute;top:663.02px;font-size:13.5px;line-height:18px;font-weight:700;color:#111111;white-space:nowrap;left:1004.4px;letter-spacing:-0.791px;">Files</div>
<div id="t110" style="position:absolute;top:664.02px;font-size:11.5px;line-height:15px;font-weight:400;color:#858581;white-space:nowrap;-webkit-text-stroke:0.3px #858581;right:47px;letter-spacing:0.168px;">View all</div>
<div style="position:absolute;left:986px;top:695px;width:426.5px;height:1px;background:#e6e6e4;border-radius:0px;"></div>
<div id="t111" style="position:absolute;top:713.17px;font-size:12.5px;line-height:17px;font-weight:400;color:#8a8a86;white-space:nowrap;left:1004.4px;">No files yet</div>
<div style="position:absolute;left:985.8px;top:761.3px;width:427px;height:160px;background:#ffffff;border-radius:16px;border:1px solid #dcdcda;box-sizing:border-box;"></div>
<div id="t112" style="position:absolute;top:776.92px;font-size:13.5px;line-height:18px;font-weight:700;color:#111111;white-space:nowrap;left:1004.7px;letter-spacing:-0.495px;">Appointments</div>
<div id="t113" style="position:absolute;top:778.52px;font-size:11.5px;line-height:15px;font-weight:400;color:#858581;white-space:nowrap;-webkit-text-stroke:0.3px #858581;right:46px;letter-spacing:0.312px;">+ Add</div>
<div style="position:absolute;left:986.8px;top:810px;width:425.2px;height:1px;background:#ececea;border-radius:0px;"></div>
<div style="position:absolute;left:1004.2px;top:827px;width:389px;height:63.8px;background:#f7f7f5;border-radius:14px;"></div>
<div style="position:absolute;left:1004.2px;top:897.5px;width:389px;height:40px;background:#f7f7f5;border-radius:14px;"></div>
<div style="position:absolute;left:1020.8px;top:840.8px;width:36.2px;height:36.2px;background:#eaf6e3;border-radius:11px;"></div>
<svg style="position:absolute;left:1031.00px;top:850.80px;" width="16" height="16" viewBox="0 0 24 24" fill="none" stroke="#2e7a12" stroke-width="2" stroke-linecap="round" stroke-linejoin="round"><path d="M8 2v4"/><path d="M16 2v4"/><rect width="18" height="18" x="3" y="4" rx="2"/><path d="M3 10h18"/></svg>
<div id="t114" style="position:absolute;top:839.80px;font-size:15px;line-height:20px;font-weight:400;color:#141414;white-space:nowrap;-webkit-text-stroke:0.3px #141414;left:1069.7px;letter-spacing:-0.045px;">Braun Altbau Sanierung</div>
<div style="position:absolute;left:1235.5px;top:845.5px;width:6.5px;height:6.5px;background:#a0a4b0;border-radius:3.25px;"></div>
<div id="t115" style="position:absolute;top:841.69px;font-size:11px;line-height:15px;font-weight:400;color:#8e8e8a;white-space:nowrap;left:1245.8px;letter-spacing:-0.233px;">Unassigned</div>
<div id="t116" style="position:absolute;top:860.70px;font-size:13px;line-height:17px;font-weight:400;color:#8a8a86;white-space:nowrap;left:1069.7px;letter-spacing:-0.105px;">Sat, Apr 18 at 09:00 AM</div>
<div style="position:absolute;left:1367.8px;top:827.5px;width:48.5px;height:48.5px;background:#9de470;border-radius:24.25px;box-shadow:0 1px 3px rgba(0,0,0,0.08);"></div>
<svg style="position:absolute;left:1381.80px;top:841.70px;" width="20" height="20" viewBox="0 0 24 24" fill="none" stroke="#173a0a" stroke-width="1.9" stroke-linecap="round" stroke-linejoin="round"><path d="M9.937 15.5A2 2 0 0 0 8.5 14.063l-6.135-1.582a.5.5 0 0 1 0-.962L8.5 9.936A2 2 0 0 0 9.937 8.5l1.582-6.135a.5.5 0 0 1 .963 0L14.063 8.5A2 2 0 0 0 15.5 9.937l6.135 1.581a.5.5 0 0 1 0 .964L15.5 14.063a2 2 0 0 0-1.437 1.437l-1.582 6.135a.5.5 0 0 1-.963 0z"/><path d="M20 3v4"/><path d="M22 5h-4"/><path d="M4 17v2"/><path d="M5 18H3"/></svg>
</div></body></html>
